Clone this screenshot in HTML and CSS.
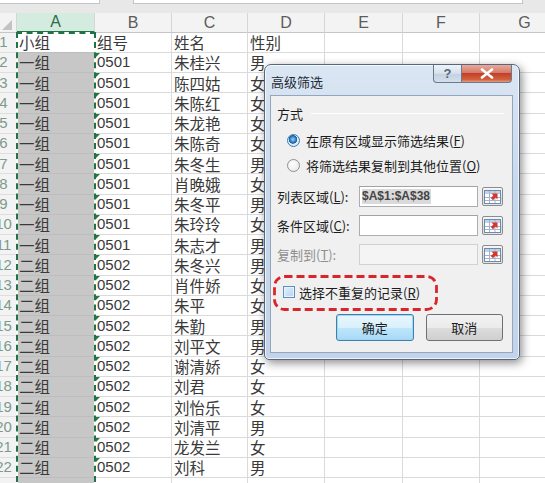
FILE: index.html
```html
<!DOCTYPE html>
<html lang="zh">
<head>
<meta charset="utf-8">
<title>高级筛选</title>
<link rel="stylesheet" href="styles.css">
</head>
<body>
<div class="topbar"><div class="fbox fbox1"></div><div class="fgap"></div><div class="fbox fbox2"></div></div>
<div class="sheet">
  <div class="row hdr">
    <div class="corner"><span class="tri"></span></div>
    <div class="sel">A</div><div>B</div><div>C</div><div>D</div><div>E</div><div>F</div><div>G</div>
  </div>
  <div class="row r1"><div class="rh">1</div><div class="c a">小组</div><div class="c">组号</div><div class="c">姓名</div><div class="c">性别</div><div class="c"></div><div class="c"></div><div class="c"></div></div>
  <div class="row"><div class="rh">2</div><div class="c a">一组</div><div class="c n">0501</div><div class="c">朱桂兴</div><div class="c">男</div><div class="c"></div><div class="c"></div><div class="c"></div></div>
  <div class="row"><div class="rh">3</div><div class="c a">一组</div><div class="c n">0501</div><div class="c">陈四姑</div><div class="c">女</div><div class="c"></div><div class="c"></div><div class="c"></div></div>
  <div class="row"><div class="rh">4</div><div class="c a">一组</div><div class="c n">0501</div><div class="c">朱陈红</div><div class="c">女</div><div class="c"></div><div class="c"></div><div class="c"></div></div>
  <div class="row"><div class="rh">5</div><div class="c a">一组</div><div class="c n">0501</div><div class="c">朱龙艳</div><div class="c">女</div><div class="c"></div><div class="c"></div><div class="c"></div></div>
  <div class="row"><div class="rh">6</div><div class="c a">一组</div><div class="c n">0501</div><div class="c">朱陈奇</div><div class="c">女</div><div class="c"></div><div class="c"></div><div class="c"></div></div>
  <div class="row"><div class="rh">7</div><div class="c a">一组</div><div class="c n">0501</div><div class="c">朱冬生</div><div class="c">男</div><div class="c"></div><div class="c"></div><div class="c"></div></div>
  <div class="row"><div class="rh">8</div><div class="c a">一组</div><div class="c n">0501</div><div class="c">肖晚娥</div><div class="c">女</div><div class="c"></div><div class="c"></div><div class="c"></div></div>
  <div class="row"><div class="rh">9</div><div class="c a">一组</div><div class="c n">0501</div><div class="c">朱冬平</div><div class="c">男</div><div class="c"></div><div class="c"></div><div class="c"></div></div>
  <div class="row"><div class="rh">10</div><div class="c a">一组</div><div class="c n">0501</div><div class="c">朱玲玲</div><div class="c">女</div><div class="c"></div><div class="c"></div><div class="c"></div></div>
  <div class="row"><div class="rh">11</div><div class="c a">一组</div><div class="c n">0501</div><div class="c">朱志才</div><div class="c">男</div><div class="c"></div><div class="c"></div><div class="c"></div></div>
  <div class="row"><div class="rh">12</div><div class="c a">二组</div><div class="c n">0502</div><div class="c">朱冬兴</div><div class="c">男</div><div class="c"></div><div class="c"></div><div class="c"></div></div>
  <div class="row"><div class="rh">13</div><div class="c a">二组</div><div class="c n">0502</div><div class="c">肖件娇</div><div class="c">女</div><div class="c"></div><div class="c"></div><div class="c"></div></div>
  <div class="row"><div class="rh">14</div><div class="c a">二组</div><div class="c n">0502</div><div class="c">朱平</div><div class="c">女</div><div class="c"></div><div class="c"></div><div class="c"></div></div>
  <div class="row"><div class="rh">15</div><div class="c a">二组</div><div class="c n">0502</div><div class="c">朱勤</div><div class="c">男</div><div class="c"></div><div class="c"></div><div class="c"></div></div>
  <div class="row"><div class="rh">16</div><div class="c a">二组</div><div class="c n">0502</div><div class="c">刘平文</div><div class="c">男</div><div class="c"></div><div class="c"></div><div class="c"></div></div>
  <div class="row"><div class="rh">17</div><div class="c a">二组</div><div class="c n">0502</div><div class="c">谢清娇</div><div class="c">女</div><div class="c"></div><div class="c"></div><div class="c"></div></div>
  <div class="row"><div class="rh">18</div><div class="c a">二组</div><div class="c n">0502</div><div class="c">刘君</div><div class="c">女</div><div class="c"></div><div class="c"></div><div class="c"></div></div>
  <div class="row"><div class="rh">19</div><div class="c a">二组</div><div class="c n">0502</div><div class="c">刘怡乐</div><div class="c">女</div><div class="c"></div><div class="c"></div><div class="c"></div></div>
  <div class="row"><div class="rh">20</div><div class="c a">二组</div><div class="c n">0502</div><div class="c">刘清平</div><div class="c">男</div><div class="c"></div><div class="c"></div><div class="c"></div></div>
  <div class="row"><div class="rh">21</div><div class="c a">二组</div><div class="c n">0502</div><div class="c">龙发兰</div><div class="c">女</div><div class="c"></div><div class="c"></div><div class="c"></div></div>
  <div class="row"><div class="rh">22</div><div class="c a">二组</div><div class="c n">0502</div><div class="c">刘科</div><div class="c">男</div><div class="c"></div><div class="c"></div><div class="c"></div></div>
  <div class="row"><div class="rh"></div><div class="c a"></div><div class="c n"></div><div class="c"></div><div class="c"></div><div class="c"></div><div class="c"></div><div class="c"></div></div>
</div>
<div class="ants"></div>

<div class="dialog">
  <div class="titlebar">
    <div class="title">高级筛选</div>
    <div class="capbtns">
      <div class="cap help">?</div>
      <div class="cap close"><svg width="14" height="11" viewBox="0 0 14 11"><path d="M2 1.5 L12 9.5 M12 1.5 L2 9.5" stroke="#fff" stroke-width="2.6" stroke-linecap="round"/></svg></div>
    </div>
  </div>
  <div class="client">
    <div class="legend"><span>方式</span><span class="gline"></span></div>
    <div class="opt"><span class="radio on"></span><span>在原有区域显示筛选结果(<u>F</u>)</span></div>
    <div class="opt"><span class="radio"></span><span>将筛选结果复制到其他位置(<u>O</u>)</span></div>
    <div class="field first"><span class="lbl">列表区域(<u>L</u>):</span><span class="inp"><span class="seltext">$A$1:$A$38</span></span><span class="rbtn"><svg width="17" height="14" viewBox="0 0 17 14"><rect x="0.5" y="0.5" width="16" height="13" fill="#fff" stroke="#6f89ae"/><rect x="1" y="1" width="15" height="3" fill="#c2d1e6"/><path d="M1 7.5h15M1 10.5h15M5.5 1v12M11 1v12" stroke="#9fb4d2"/><path d="M7.5 3.5 L13.5 3.5 L13.5 9.5 L11.6 7.6 L9 10.2 L6.8 8 L9.4 5.4 Z" fill="#d9342b"/></svg></span></div>
    <div class="field"><span class="lbl">条件区域(<u>C</u>):</span><span class="inp"></span><span class="rbtn"><svg width="17" height="14" viewBox="0 0 17 14"><rect x="0.5" y="0.5" width="16" height="13" fill="#fff" stroke="#6f89ae"/><rect x="1" y="1" width="15" height="3" fill="#c2d1e6"/><path d="M1 7.5h15M1 10.5h15M5.5 1v12M11 1v12" stroke="#9fb4d2"/><path d="M7.5 3.5 L13.5 3.5 L13.5 9.5 L11.6 7.6 L9 10.2 L6.8 8 L9.4 5.4 Z" fill="#d9342b"/></svg></span></div>
    <div class="field dis"><span class="lbl">复制到(<u>T</u>):</span><span class="inp"></span><span class="rbtn"><svg width="17" height="14" viewBox="0 0 17 14"><rect x="0.5" y="0.5" width="16" height="13" fill="#fff" stroke="#6f89ae"/><rect x="1" y="1" width="15" height="3" fill="#c2d1e6"/><path d="M1 7.5h15M1 10.5h15M5.5 1v12M11 1v12" stroke="#9fb4d2"/><path d="M7.5 3.5 L13.5 3.5 L13.5 9.5 L11.6 7.6 L9 10.2 L6.8 8 L9.4 5.4 Z" fill="#d9342b"/></svg></span></div>
    <div class="chkrow">
      <span class="chk"></span><span>选择不重复的记录(<u>R</u>)</span>
      <svg class="redbox" width="165" height="36" viewBox="0 0 165 36"><rect x="1.5" y="1.5" width="162" height="33" rx="10" ry="10" fill="none" stroke="#d8262b" stroke-width="2.8" stroke-dasharray="8 4"/></svg>
    </div>
    <div class="btns"><span class="btn def">确定</span><span class="btn">取消</span></div>
  </div>
</div>
</body>
</html>
```

FILE: styles.css
```css
* { box-sizing: border-box; }
html, body { margin: 0; padding: 0; }
body {
  width: 545px;
  height: 483px;
  overflow: hidden;
  background: #fff;
  position: relative;
  font-family: "Noto Sans CJK SC", "Liberation Sans", sans-serif;
}

/* formula bar remnant */
.topbar {
  height: 13px;
  background: #e8e8e8;
  display: flex;
  align-items: flex-start;
}
.fbox {
  height: 4px;
  background: #fff;
  border-bottom: 1px solid #c6c6c6;
}
.fbox1 { width: 100px; border-right: 1px solid #c6c6c6; }
.fgap { width: 33px; }
.fbox2 { width: 390px; border-left: 1px solid #c6c6c6; border-right: 1px solid #c6c6c6; }

/* grid */
.sheet { margin-left: -9px; }
.row {
  display: grid;
  grid-template-columns: 26px 78px 77px 76px 77px 78px 77px 90px;
  height: 20.25px;
}
.hdr { height: 19.5px; }
.hdr > div {
  background: #f3f3f3;
  border-right: 1px solid #d6d6d6;
  border-bottom: 1px solid #c6c6c6;
  color: #5c5c5c;
  font-family: "Liberation Sans", sans-serif;
  font-size: 16px;
  line-height: 18px;
  display: flex;
  align-items: center;
  justify-content: center;
}
.hdr > .sel {
  background: #d4ecdf;
  color: #2d6b4a;
  border-bottom: 2px solid #217346;
}
.hdr > .corner {
  justify-content: flex-end;
  align-items: flex-end;
  padding: 0 4px 2px 0;
}
.tri {
  width: 0;
  height: 0;
  border-left: 10px solid transparent;
  border-bottom: 10px solid #c2c2c2;
}
.rh {
  background: #f3f3f3;
  border-right: 1px solid #c6c6c6;
  border-bottom: 1px solid #dedede;
  color: #7d9a8b;
  font-family: "Liberation Sans", sans-serif;
  font-size: 15px;
  line-height: 18px;
  display: flex;
  align-items: center;
  justify-content: center;
}
.c {
  border-right: 1px solid #dadada;
  border-bottom: 1px solid #dadada;
  font-size: 15.5px;
  color: #3a3a3a;
  padding-left: 2px;
  display: flex;
  align-items: center;
  line-height: 18px;
  white-space: nowrap;
}
.a { background: #c7c7c7; border-right-color: #bdbdbd; border-bottom-color: #bdbdbd; }
.r1 .a { background: #fff; }
.n {
  font-family: "Liberation Sans", sans-serif;
  font-size: 15px;
  position: relative;
}
.n::before {
  content: "";
  position: absolute;
  left: 0;
  top: 0;
  border-top: 5px solid #1f7a3c;
  border-right: 5px solid transparent;
}
.row:last-child .n::before { display: none; }

/* marching ants around column A */
.ants {
  position: absolute;
  left: 16px;
  top: 32px;
  width: 80px;
  height: 460px;
  border: 2px solid #fff;
}
.ants::before {
  content: "";
  position: absolute;
  inset: -2px;
  border: 2px dashed #217346;
}

/* dialog */
.dialog {
  position: absolute;
  left: 264px;
  top: 64px;
  width: 256px;
  height: 296px;
  border: 1px solid #56667c;
  border-radius: 7px 7px 5px 5px;
  background: linear-gradient(#dbe6f3, #c9d9ec 40%, #c3d4ea);
  box-shadow: 2px 3px 10px rgba(0, 0, 0, 0.45), inset 0 0 0 1px rgba(255,255,255,0.7);
  padding: 0 6px 6px 5px;
  display: flex;
  flex-direction: column;
  font-size: 13px;
  line-height: 17px;
  color: #1c1c1c;
}
.titlebar {
  height: 30px;
  display: flex;
  align-items: flex-start;
}
.title {
  padding-top: 8px;
  padding-left: 1px;
  font-size: 13px;
  color: #1e2a36;
}
.capbtns {
  margin-left: auto;
  display: flex;
  margin-right: 1px;
}
.cap {
  height: 18px;
  border: 1px solid #6c7a8e;
  border-top: none;
  display: flex;
  align-items: center;
  justify-content: center;
}
.help {
  width: 29px;
  border-radius: 0 0 0 4px;
  background: linear-gradient(#eef3f9, #d6e0ec 50%, #c3d0e0 51%, #d4dfeb);
  color: #55657a;
  font-family: "Liberation Sans", sans-serif;
  font-size: 13px;
  font-weight: bold;
}
.close {
  width: 50px;
  border-left: none;
  border-radius: 0 0 4px 0;
  background: linear-gradient(#e9a99c, #d57b68 45%, #c2402a 50%, #d2603f 85%, #e29b7e);
}
.client {
  flex: 1;
  background: #f0f0f0;
  border: 1px solid #93a6bf;
  padding: 9px 9px 0 6px;
  display: flex;
  flex-direction: column;
}
.legend {
  height: 16px;
  display: flex;
  align-items: center;
  gap: 8px;
}
.gline {
  flex: 1;
  height: 1px;
  background: #d9dee4;
  border-bottom: 1px solid #fff;
  margin-right: -1px;
}
.opt {
  height: 25px;
  display: flex;
  align-items: center;
  gap: 6px;
  padding-left: 10px;
}
.legend + .opt { margin-top: 7px; }
.radio {
  width: 13px;
  height: 13px;
  border-radius: 50%;
  border: 1px solid #8e8f8f;
  background: radial-gradient(circle at 40% 40%, #fff, #e4e4e4);
  display: inline-block;
}
.radio.on {
  border-color: #3c7fb1;
  background: radial-gradient(circle at 45% 40%, #9fd3f5 0, #2c7cc4 3px, #1c5b9a 4px, #e9f2fa 4.6px, #dfe8f1 6px);
}
.field {
  height: 21px;
  display: flex;
  align-items: center;
  margin-top: 8px;
}
.lbl { width: 82px; flex-shrink: 0; white-space: nowrap; }
.inp {
  width: 119px;
  height: 21px;
  border: 1px solid #abadb3;
  border-top-color: #a0a3aa;
  background: #fff;
  display: flex;
  align-items: center;
  padding-left: 2px;
}
.seltext {
  background: #dadada;
  font-family: "Liberation Sans", sans-serif;
  font-weight: bold;
  font-size: 12px;
  color: #444;
  line-height: 15px;
  padding-right: 1px;
}
.rbtn {
  width: 21px;
  height: 19px;
  margin-left: 4px;
  border: 1px solid #8b8c8f;
  border-radius: 2px;
  background: linear-gradient(#f6f6f6, #e3e3e3 50%, #d6d6d6 51%, #e6e6e6);
  display: flex;
  align-items: center;
  justify-content: center;
}
.dis .lbl { color: #8f8f8f; }
.dis .inp { background: #f4f4f4; border-color: #cfd1d4; }
.chkrow {
  position: relative;
  height: 34px;
  margin-top: 10px;
  margin-left: -4px;
  width: 165px;
  display: flex;
  align-items: center;
  gap: 4px;
  padding-left: 10px;
  white-space: nowrap;
}
.chk {
  width: 12px;
  height: 12px;
  border: 1px solid #5f8fc0;
  background: linear-gradient(135deg, #e3f0fb, #b5d4ef);
  box-shadow: inset 0 0 0 1px #eaf3fb;
}
.redbox {
  position: absolute;
  left: 0;
  top: 0;
}
.btns {
  display: flex;
  gap: 12px;
  margin-top: 5px;
  padding-left: 59px;
}
.btn {
  width: 78px;
  height: 27px;
  border: 1px solid #707070;
  border-radius: 3px;
  background: linear-gradient(#f2f2f2, #ebebeb 50%, #dddddd 51%, #cfcfcf);
  display: flex;
  align-items: center;
  justify-content: center;
  color: #1c1c1c;
}
.btn.def {
  border-color: #3c7fb1;
  box-shadow: inset 0 0 0 1px #a5d6f2;
  background: linear-gradient(#eaf6fd, #d9f0fc 50%, #bee6fd 51%, #a7d9f5);
}
```
